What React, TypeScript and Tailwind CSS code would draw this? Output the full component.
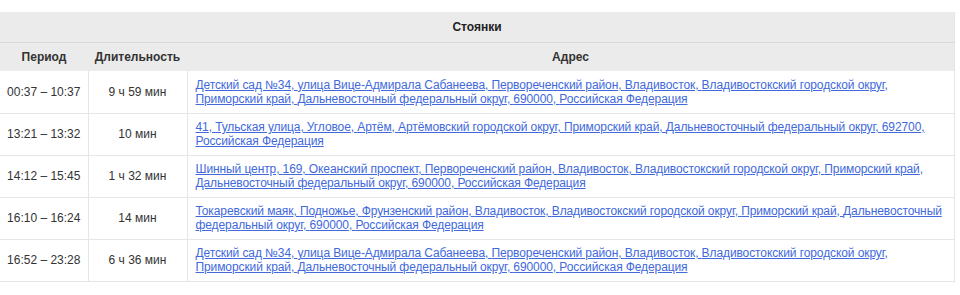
const rows = [
	{
		period: '00:37 – 10:37',
		duration: '9 ч 59 мин',
		address: ['Детский сад №34', 'улица Вице-Адмирала Сабанеева', 'Первореченский район', 'Владивосток', 'Владивостокский городской округ', 'Приморский край', 'Дальневосточный федеральный округ', '690000', 'Российская Федерация'],
	},
	{
		period: '13:21 – 13:32',
		duration: '10 мин',
		address: ['41', 'Тульская улица', 'Угловое', 'Артём', 'Артёмовский городской округ', 'Приморский край', 'Дальневосточный федеральный округ', '692700', 'Российская Федерация'],
	},
	{
		period: '14:12 – 15:45',
		duration: '1 ч 32 мин',
		address: ['Шинный центр', '169', 'Океанский проспект', 'Первореченский район', 'Владивосток', 'Владивостокский городской округ', 'Приморский край', 'Дальневосточный федеральный округ', '690000', 'Российская Федерация'],
	},
	{
		period: '16:10 – 16:24',
		duration: '14 мин',
		address: ['Токаревский маяк', 'Подножье', 'Фрунзенский район', 'Владивосток', 'Владивостокский городской округ', 'Приморский край', 'Дальневосточный федеральный округ', '690000', 'Российская Федерация'],
	},
	{
		period: '16:52 – 23:28',
		duration: '6 ч 36 мин',
		address: ['Детский сад №34', 'улица Вице-Адмирала Сабанеева', 'Первореченский район', 'Владивосток', 'Владивостокский городской округ', 'Приморский край', 'Дальневосточный федеральный округ', '690000', 'Российская Федерация'],
	},
];

export default function App() {
	return (
		<div className="w-[960px] h-[295px] bg-white pt-3 font-['Liberation_Sans',Arial,sans-serif] text-[12px] text-[#333]">
			<table className="w-[955px] border-collapse table-fixed">
				<colgroup>
					<col className="w-[88px]" />
					<col className="w-[99px]" />
					<col />
				</colgroup>
				<thead>
					<tr className="bg-[#ebebeb] h-[30px]">
						<th colSpan={3} className="font-bold text-center border-b border-[#d8d8d8] border-r border-r-[#e4e4e4] text-[#222]">
							Стоянки
						</th>
					</tr>
					<tr className="bg-[#ebebeb] h-[29px]">
						<th className="font-bold text-center text-[#333]">Период</th>
						<th className="font-bold text-center text-[#333]">Длительность</th>
						<th className="font-bold text-center text-[#333] border-r border-[#e4e4e4]">Адрес</th>
					</tr>
				</thead>
				<tbody>
					{rows.map((r, i) => (
						<tr key={i} className="h-[42px] border-b border-[#e6e6e6]">
							<td className="text-center text-[#333] border-r border-[#e6e6e6]">{r.period}</td>
							<td className="text-center text-[#333] border-r border-[#e6e6e6]">{r.duration}</td>
							<td className="px-2 leading-[14px] tracking-[-0.1px] border-r border-[#e6e6e6] text-[#4169dc]">
								{r.address.map((a, j) => (
									<span key={j}>
										<a href="#" className="underline decoration-[#4169dc]">{a}</a>
										{j < r.address.length - 1 && <span className="underline">, </span>}
									</span>
								))}
							</td>
						</tr>
					))}
				</tbody>
			</table>
		</div>
	);
}
